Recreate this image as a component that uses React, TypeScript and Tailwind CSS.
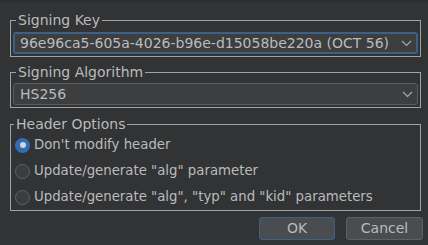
import { useState } from "react";

const font = { fontFamily: '"DejaVu Sans", sans-serif' };

function Chevron() {
  return (
    <svg width="11" height="7" viewBox="0 0 11 7" className="shrink-0">
      <path d="M1 1l4.5 4.5L10 1" fill="none" stroke="#a8a8a8" strokeWidth="1.2" />
    </svg>
  );
}

function Combo({ value, focused }: { value: string; focused?: boolean }) {
  return (
    <div
      className={`flex h-[22px] items-center justify-between rounded-[3px] bg-[#3c3e40] pl-[5px] pr-[4px] ${
        focused ? "border-2 border-[#3d6185]" : "border border-[#5a5d60] pl-[6px]"
      }`}
    >
      <span className="leading-[16px]">{value}</span>
      <Chevron />
    </div>
  );
}

function Radio({ label, checked, onClick }: { label: string; checked: boolean; onClick: () => void }) {
  return (
    <button onClick={onClick} className="flex h-[26px] items-center gap-[4px] pl-[4px] text-left">
      {checked ? (
        <span className="flex h-[15px] w-[15px] items-center justify-center rounded-full bg-[#2f6db5]">
          <span className="h-[6px] w-[6px] rounded-full bg-[#d4d4d4]" />
        </span>
      ) : (
        <span className="h-[15px] w-[15px] rounded-full border border-[#5f6264] bg-[#3a3c3e]" />
      )}
      <span className="text-[13.3px] leading-[16px]">{label}</span>
    </button>
  );
}

export default function App() {
  const [opt, setOpt] = useState(0);
  const options = [
    "Don't modify header",
    'Update/generate "alg" parameter',
    'Update/generate "alg", "typ" and "kid" parameters',
  ];

  return (
    <div
      className="flex h-[245px] w-[428px] flex-col border-t-2 border-[#2b2d2f] bg-[#313335] pt-[10px] text-[14px] text-[#bbbbbb]"
      style={font}
    >
      {/* Signing Key */}
      <fieldset className="ml-[10px] mr-[7px] border border-[#a2a2a2] px-[2px] pb-[2px]">
        <legend className="ml-[3px] px-[2px] leading-[16px]">Signing Key</legend>
        <div className="mt-[4px]">
          <Combo value="96e96ca5-605a-4026-b96e-d15058be220a (OCT 56)" focused />
        </div>
      </fieldset>

      {/* Signing Algorithm */}
      <fieldset className="ml-[10px] mr-[7px] mt-[7px] border border-[#a2a2a2] px-[2px] pb-[2px]">
        <legend className="ml-[3px] px-[2px] leading-[16px]">Signing Algorithm</legend>
        <div className="mt-[3px]">
          <Combo value="HS256" />
        </div>
      </fieldset>

      {/* Header Options */}
      <fieldset className="ml-[10px] mr-[7px] mt-[8px] flex flex-col border border-[#a2a2a2]">
        <legend className="ml-[3px] px-[2px] leading-[16px]">Header Options</legend>
        {options.map((o, i) => (
          <Radio key={o} label={o} checked={opt === i} onClick={() => setOpt(i)} />
        ))}
      </fieldset>

      <div className="mr-[5px] mt-[6px] flex justify-end gap-[11px]">
        <button className="h-[23px] w-[76px] rounded-[3px] border border-[#3d6185] bg-[#4a4d50] text-[#bbbbbb]">
          OK
        </button>
        <button className="h-[23px] w-[77px] rounded-[3px] border border-[#5e6164] bg-[#4a4d50] text-[#bbbbbb]">
          Cancel
        </button>
      </div>
    </div>
  );
}
